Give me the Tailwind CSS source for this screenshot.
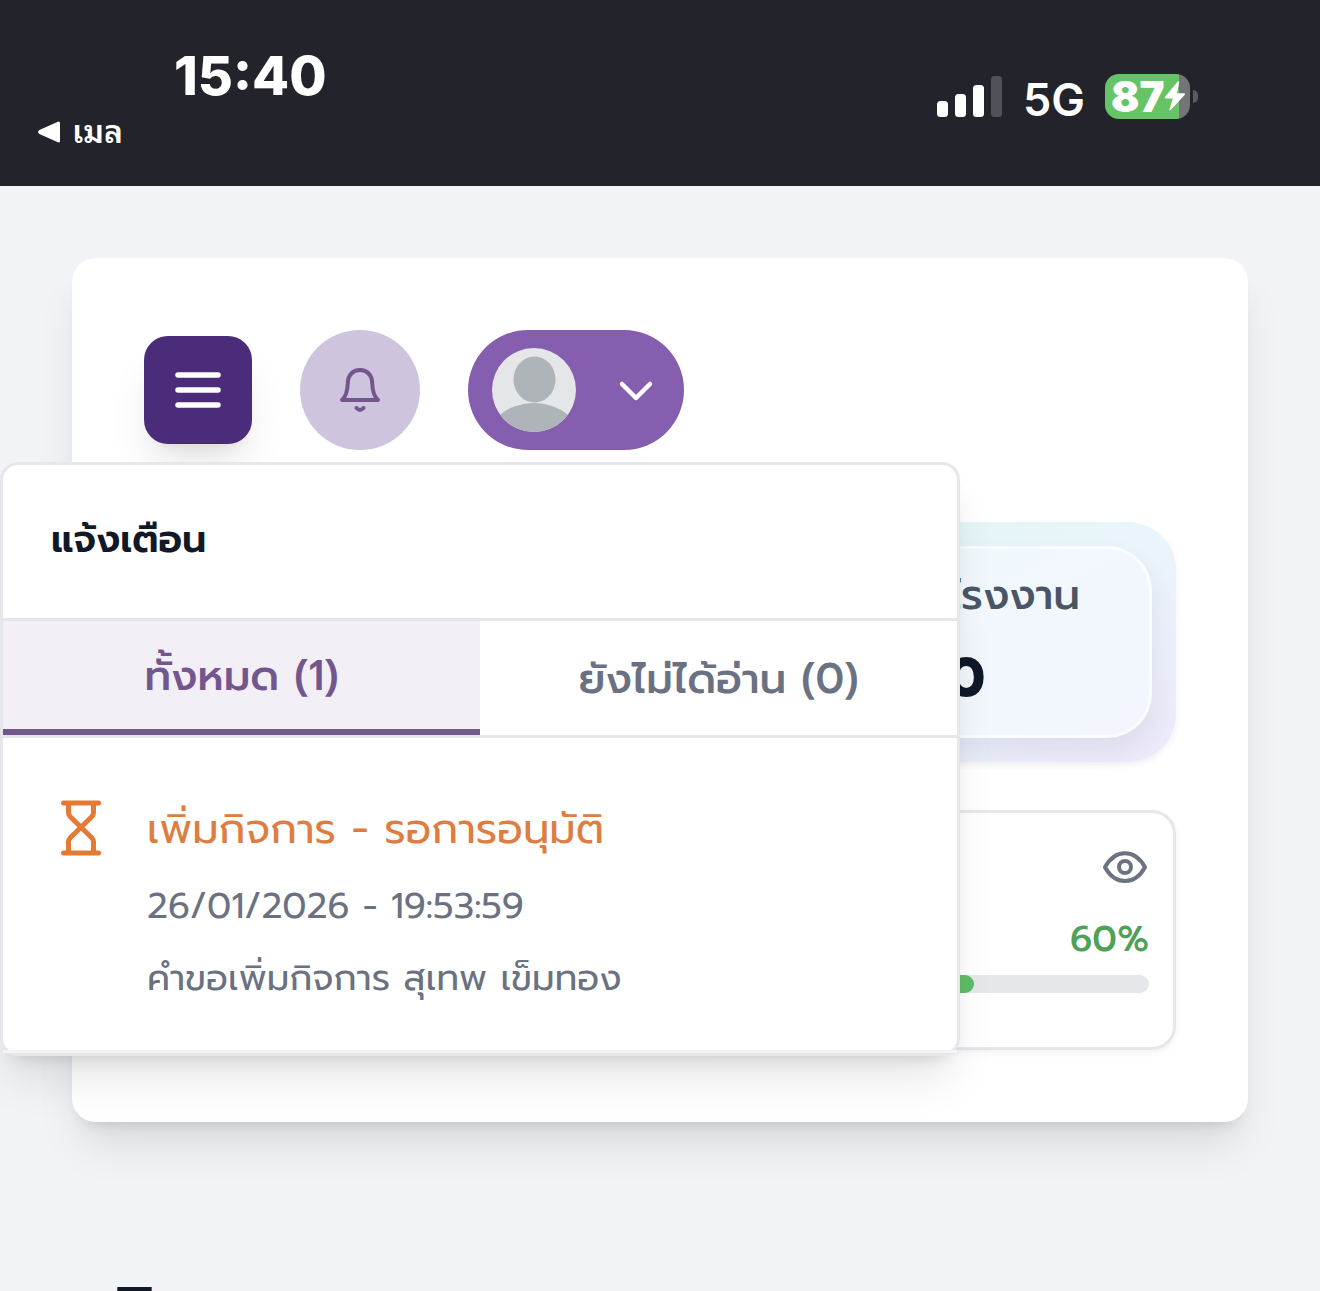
<!DOCTYPE html>
<html lang="th">
<head>
    <meta charset="UTF-8">
    <meta name="viewport" content="width=device-width, initial-scale=1.0">
    <title>แจ้งเตือน</title>
    <script src="https://cdn.jsdelivr.net/npm/@tailwindcss/browser@4"></script>
</head>
<body class="h-screen overflow-hidden bg-[#f1f3f7] font-['Prompt','Noto_Sans_Thai','Noto_Sans',sans-serif] text-[#111827]">

    <!-- Status bar -->
    <header class="flex h-[186px] justify-between bg-[#23232b] pr-[122px] pl-9 font-['Inter','Noto_Sans_Thai_Looped','Sarabun','Loma',sans-serif] text-white">
        <div>
            <p class="mt-11 ml-[138px] text-[54px] leading-[64px] font-extrabold">15:40</p>
            <a href="#" class="flex items-center gap-3 text-[32px] leading-[48px] font-semibold">
                <svg class="h-6 w-6" viewBox="0 0 24 24" fill="#fff" stroke="#fff" stroke-width="3" stroke-linejoin="round" aria-hidden="true"><path d="M22.500 3v18L4 12.600Q3.200 12 4 11.400Z"/></svg>
                เมล
            </a>
        </div>
        <div class="mt-[72px] flex h-12 items-center gap-5">
            <svg class="h-[42px] w-[66px]" viewBox="0 0 66 42" fill="#fff" aria-hidden="true">
                <rect x="0" y="26" width="11" height="16" rx="3.500"/>
                <rect x="18" y="19" width="11" height="23" rx="3.500"/>
                <rect x="36" y="10" width="11" height="32" rx="3.500"/>
                <rect x="54" y="1" width="11" height="41" rx="3.500" fill="#515158"/>
            </svg>
            <span class="mt-2 text-[45px] leading-[48px] font-semibold">5G</span>
            <div class="flex items-center gap-[3px]">
                <div class="flex h-[45px] w-[85px] items-center rounded-[14px] bg-linear-to-r from-[#67c466] from-87% to-[#737378] to-87% pl-[6px]">
                    <span class="text-[42px] leading-[45px] font-black">87</span>
                    <svg class="h-[30px] w-[22px]" viewBox="0 0 22 30" fill="#fff" aria-hidden="true"><path d="M13.500.8Q15.600-.5 15.200 1.500L13 12.200H19.800Q22 12.200 20.600 14L7 28.800Q5 30.500 5.600 28L8.800 17.500H2Q0 17.300 1.400 15.400Z"/></svg>
                </div>
                <div class="h-[13px] w-[5px] rounded-r-full bg-[#5a5a60]"></div>
            </div>
        </div>
    </header>

    <main class="px-[72px] pt-[72px]">
        <section class="rounded-3xl bg-white p-[72px] shadow-[0_30px_45px_-9px_rgba(0,0,0,0.1),0_12px_18px_-12px_rgba(0,0,0,0.16)]">

            <!-- Toolbar -->
            <div class="relative flex items-center gap-12">
                <button type="button" aria-label="เมนู" class="flex size-[108px] items-center justify-center rounded-3xl bg-[#4a2c7a] shadow-[0_30px_45px_-9px_rgba(0,0,0,0.1),0_12px_18px_-12px_rgba(0,0,0,0.1)]">
                    <svg class="size-[60px]" viewBox="0 0 60 60" fill="none" stroke="#fff" stroke-width="5.500" stroke-linecap="round"><path d="M10 15h40M10 30h40M10 45h40"/></svg>
                </button>
                <button type="button" aria-label="แจ้งเตือน" class="flex size-[120px] items-center justify-center rounded-full bg-[#cec4dd]">
                    <svg class="size-[60px]" viewBox="0 0 60 60" fill="none" stroke="#74568f" stroke-width="4" stroke-linecap="round" stroke-linejoin="round">
                        <path d="M12 40h36c-4-3.500-5.500-8-5.800-17C42 15 37 10 30 10s-12 5-12.200 13C17.500 32 16 36.500 12 40Z"/>
                        <path d="M26.500 48q3.500 4 7 0"/>
                    </svg>
                </button>
                <button type="button" aria-label="บัญชีผู้ใช้" class="flex h-[120px] w-[216px] items-center justify-between rounded-full bg-[#855eaf] px-6">
                    <svg class="size-[84px] rounded-full" viewBox="0 0 84 84" aria-hidden="true">
                        <rect width="84" height="84" fill="#e4e6e8"/>
                        <ellipse cx="42.500" cy="31.500" rx="21" ry="23" fill="#aeb4b7"/>
                        <ellipse cx="42" cy="93" rx="47" ry="38" fill="#aeb4b7"/>
                    </svg>
                    <svg class="size-12" viewBox="0 0 48 48" fill="none" stroke="#fff" stroke-width="4.500" stroke-linecap="round" stroke-linejoin="round"><path d="M10 18l14 14 14-14"/></svg>
                </button>

                <!-- Notification dropdown -->
                <div class="absolute top-[132px] -left-36 z-10 w-[960px] rounded-[18px] border-[3px] border-gray-200 bg-white shadow-[0_30px_45px_-9px_rgba(0,0,0,0.1),0_12px_18px_-12px_rgba(0,0,0,0.16)]">
                    <div class="border-b-[3px] border-gray-200 px-12 pt-[46px] pb-[50px]">
                        <h2 class="text-[38px] leading-[57px] font-semibold">แจ้งเตือน</h2>
                    </div>
                    <div class="grid grid-cols-2 border-b-[3px] border-gray-200 text-[42px] leading-[60px] font-medium">
                        <button type="button" class="border-b-6 border-[#74568f] bg-[#f2eff6] pt-[25px] pb-[23px] text-[#74568f]">ทั้งหมด (1)</button>
                        <button type="button" class="pt-[25px] pb-[23px] text-gray-500">ยังไม่ได้อ่าน (0)</button>
                    </div>
                    <a href="#" class="flex gap-9 border-b-[3px] border-gray-100 px-12 pt-[60px] pb-[42px]">
                        <svg class="size-[60px]" viewBox="0 0 60 60" fill="none" stroke="#e57a35" stroke-width="5" stroke-linecap="round" stroke-linejoin="round" aria-hidden="true">
                            <path d="M12.500 5h35M12.500 55h35M17.500 5v9.500q0 2.500 2 4.500L40.500 39.500q2 2 2 4.500V55M42.500 5v9.500q0 2.500-2 4.500L19.500 39.500q-2 2-2 4.500V55"/>
                        </svg>
                        <div class="flex flex-col gap-3">
                            <h3 class="pb-[3px] text-[42px] leading-[63px] text-[#dd7d41]">เพิ่มกิจการ - รอการอนุมัติ</h3>
                            <time class="text-[36px] leading-[60px] text-gray-500">26/01/2026 - 19:53:59</time>
                            <p class="text-[36px] leading-[60px] text-gray-500">คำขอเพิ่มกิจการ สุเทพ เข็มทอง</p>
                        </div>
                    </a>
                </div>
            </div>

            <!-- Summary cards -->
            <div class="mt-[72px] grid grid-cols-2 gap-12">
                <div class="col-start-2 rounded-[48px] bg-linear-to-br from-[#dcf5f0] via-[#eaf5fb] to-[#ece8fa] p-6 shadow-[0_3px_6px_rgba(0,0,0,0.06)]">
                    <div class="flex h-48 flex-col items-end rounded-[45px] border-[3px] border-white/60 bg-[#f4f8fe]/75 pt-[15px] shadow-[0_12px_24px_rgba(40,40,70,0.08)]">
                        <p class="pr-[69px] text-[42px] leading-[63px] font-medium text-gray-600">โรงงาน</p>
                        <p class="pt-[3px] pr-[164px] text-[54px] leading-[96px] font-bold">0</p>
                    </div>
                </div>
                <div class="col-start-2 flex h-60 flex-col rounded-3xl border-[3px] border-gray-200 bg-white px-6 pt-[30px] shadow-[0_3px_6px_rgba(0,0,0,0.05)]">
                    <button type="button" aria-label="ดูรายละเอียด" class="self-end">
                        <svg class="size-12" viewBox="0 0 48 48" fill="none" stroke="#6b7280" stroke-width="4"><path d="M4 24.200C9 15 16 10.200 24 10.200s15 4.800 20 14C39 33.200 32 38 24 38S9 33.200 4 24.200Z" stroke-linejoin="round"/><circle cx="24" cy="24" r="6"/></svg>
                    </button>
                    <p class="mt-[18px] text-right text-[36px] leading-[60px] font-medium text-[#4fa058]">60%</p>
                    <div class="mt-[6px] h-[18px] rounded-full bg-gray-200">
                        <div class="h-full rounded-full bg-[#5dbd68]" style="width: 60%"></div>
                    </div>
                </div>
            </div>
        </section>

        <h1 class="mt-[142px] ml-9 text-[72px] leading-[100px] font-bold">กิจการ</h1>
    </main>
</body>
</html>
